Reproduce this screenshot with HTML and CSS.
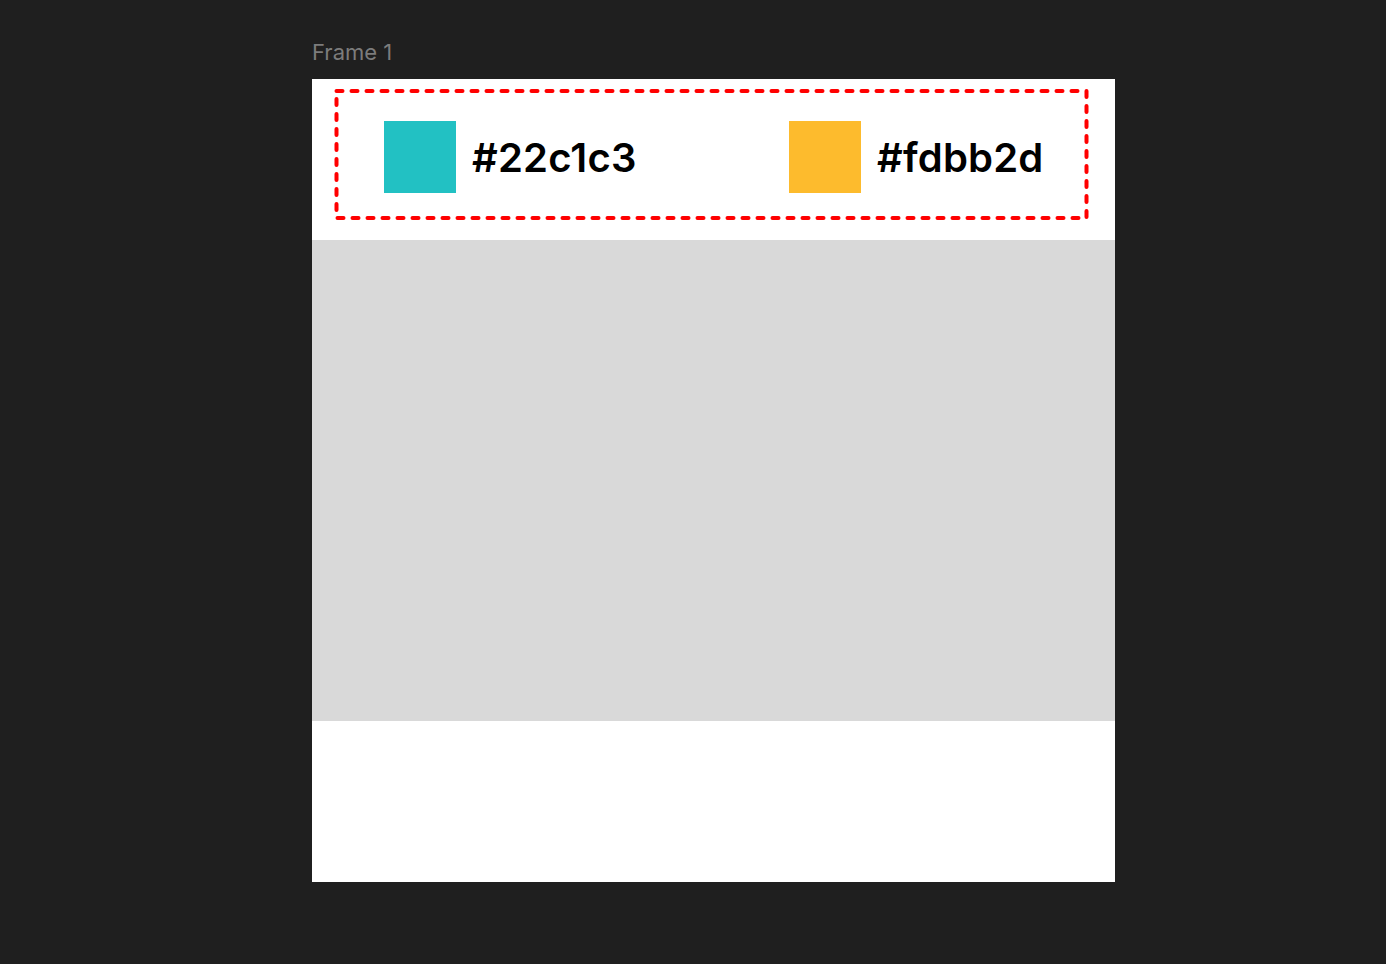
FILE: index.html
```html
<!DOCTYPE html>
<html lang="en">
<head>
<meta charset="utf-8">
<title>Frame 1</title>
<link rel="stylesheet" href="styles.css">
</head>
<body>
<div class="canvas">
  <div class="frame-label">Frame 1</div>
  <div class="frame">
    <div class="header">
      <div class="palette">
        <svg class="dashed" viewBox="0 0 755 131" width="755" height="131" aria-hidden="true">
          <rect x="2.5" y="2" width="750" height="127" fill="none" stroke="#ff0000" stroke-width="4" stroke-dasharray="6 9" stroke-linecap="round"/>
        </svg>
        <div class="swatch-item">
          <div class="swatch swatch-teal"></div>
          <span class="hex">#22c1c3</span>
        </div>
        <div class="swatch-item">
          <div class="swatch swatch-amber"></div>
          <span class="hex">#fdbb2d</span>
        </div>
      </div>
    </div>
    <div class="gray-block"></div>
    <div class="footer"></div>
  </div>
</div>
</body>
</html>
```

FILE: styles.css
```css
html, body {
  margin: 0;
  padding: 0;
  background: #1f1f1f;
}

body {
  width: 1386px;
  height: 964px;
  overflow: hidden;
  font-family: Inter, "Liberation Sans", sans-serif;
}

.canvas {
  padding: 40px 0 0 312px;
}

.frame-label {
  font-size: 22px;
  line-height: 24px;
  color: #7c7c7c;
  font-weight: 400;
  margin-bottom: 15px;
}

.frame {
  width: 803px;
  height: 803px;
  background: #ffffff;
  display: flex;
  flex-direction: column;
}

.header {
  height: 161px;
  padding: 10px 0 0 22px;
  box-sizing: border-box;
}

.palette {
  position: relative;
  width: 755px;
  height: 131px;
  box-sizing: border-box;
  padding: 32px 0 0 50px;
  display: flex;
  align-items: flex-start;
}

.dashed {
  position: absolute;
  left: 0;
  top: 0;
  display: block;
}

.swatch-item {
  display: flex;
  align-items: center;
  gap: 16px;
  flex: 0 0 405px;
}

.swatch-item:last-child {
  flex: 0 0 auto;
}

.swatch {
  width: 72px;
  height: 72px;
}

.swatch-teal {
  background: #22c1c3;
}

.swatch-amber {
  background: #fdbb2d;
}

.hex {
  font-size: 40px;
  font-weight: 600;
  letter-spacing: 0.2px;
  color: #000000;
  line-height: 48px;
  padding-top: 2px;
}

.gray-block {
  height: 481px;
  background: #d9d9d9;
}

.footer {
  height: 161px;
  background: #ffffff;
}
```
